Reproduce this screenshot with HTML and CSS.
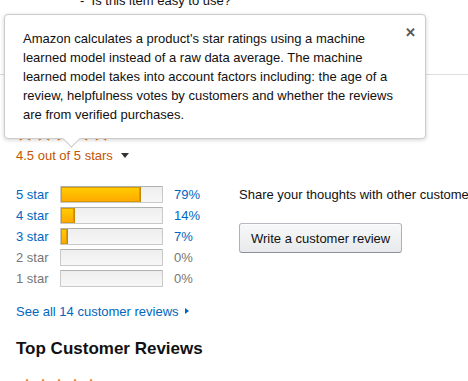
FILE: index.html
```html
<!DOCTYPE html>
<html lang="en">
<head>
  <meta charset="UTF-8" />
  <title>Customer Reviews</title>
  <link rel="stylesheet" href="styles.css">
</head>
<body>
  <div class="page">
    <div class="question">-&nbsp;&nbsp;Is this item easy to use?</div>
    <div class="divider"></div>

    <div class="stars big">
      <svg width="94" height="18" viewBox="0 0 94 18">
        <g fill="#ffa41c" stroke="#de7921" stroke-width="0.8">
          <path id="s" d="M9 1l2.4 5.2 5.6.6-4.2 3.8 1.2 5.6L9 13.4 4 16.2l1.2-5.6L1 6.8l5.6-.6z"/>
          <use href="#s" x="19"/>
          <use href="#s" x="38"/>
          <use href="#s" x="57"/>
          <use href="#s" x="76"/>
        </g>
      </svg>
    </div>
    <div class="rating">4.5 out of 5 stars <span class="caret"></span></div>

    <div class="summary">
      <div class="histogram">
        <div class="hist-row">
          <a class="hist-label">5 star</a>
          <div class="bar"><div class="fill" style="width:79%"></div></div>
          <a class="hist-pct">79%</a>
        </div>
        <div class="hist-row">
          <a class="hist-label">4 star</a>
          <div class="bar"><div class="fill" style="width:14%"></div></div>
          <a class="hist-pct">14%</a>
        </div>
        <div class="hist-row">
          <a class="hist-label">3 star</a>
          <div class="bar"><div class="fill" style="width:7%"></div></div>
          <a class="hist-pct">7%</a>
        </div>
        <div class="hist-row empty">
          <span class="hist-label">2 star</span>
          <div class="bar"></div>
          <span class="hist-pct">0%</span>
        </div>
        <div class="hist-row empty">
          <span class="hist-label">1 star</span>
          <div class="bar"></div>
          <span class="hist-pct">0%</span>
        </div>
      </div>

      <div class="share">
        <div class="share-text">Share your thoughts with other customers</div>
        <button class="review-btn">Write a customer review</button>
      </div>
    </div>

    <a class="see-all">See all 14 customer reviews <span class="arrow"></span></a>

    <h2 class="top-title">Top Customer Reviews</h2>

    <div class="review-head">
      <svg width="80" height="14" viewBox="0 0 80 14">
        <g fill="#ffa41c" stroke="#de7921" stroke-width="0.8">
          <path id="t" d="M7 1l1.9 4 4.3.5-3.2 2.9.9 4.3L7 10.5 3.1 12.7 4 8.4.8 5.5l4.3-.5z"/>
          <use href="#t" x="16"/>
          <use href="#t" x="32"/>
          <use href="#t" x="48"/>
          <use href="#t" x="64"/>
        </g>
      </svg>
      <span class="review-title">Welcome change</span>
    </div>

    <div class="popover">
      <span class="close">&#x2715;</span>
      Amazon calculates a product's star ratings using a machine learned model instead of a raw data average. The machine learned model takes into account factors including: the age of a review, helpfulness votes by customers and whether the reviews are from verified purchases.
      <span class="pointer"></span>
    </div>
  </div>
</body>
</html>
```

FILE: styles.css
```css
body {
  margin: 0;
  font-family: "Liberation Sans", Arial, sans-serif;
  font-size: 13px;
  line-height: 19px;
  color: #111;
  background: #fff;
  overflow: hidden;
}
a { color: #0066c0; text-decoration: none; }

.page { position: relative; display: flow-root; padding: 0 16px; }

.question { margin-top: -9px; padding-left: 64px; white-space: nowrap; }
.divider { height: 1px; background: #ddd; margin: 64px -16px 0 -16px; }

.stars { height: 18px; }
.stars.big { margin-top: 49px; }
.stars svg { display: block; }

.rating { margin-top: 4px; color: #c45500; }
.caret {
  display: inline-block; width: 0; height: 0; margin-left: 5px;
  border-left: 4px solid transparent; border-right: 4px solid transparent;
  border-top: 5px solid #333; vertical-align: 2px;
}

.summary { display: flex; margin-top: 19px; }
.histogram { width: 223px; flex-shrink: 0; }
.hist-row { display: flex; align-items: center; height: 21px; }
.hist-label { width: 44px; white-space: nowrap; }
.bar {
  width: 103px; height: 17px; box-sizing: border-box;
  border: 1px solid #c9c9c9; border-top-color: #b0b0b0; border-radius: 1px;
  background: linear-gradient(#eee, #f7f7f7);
  overflow: hidden;
}
.fill {
  height: 100%; box-sizing: border-box;
  border-right: 1px solid #c88a00;
  box-shadow: inset 0 0 0 1px #d89a00;
  background: linear-gradient(#ffce00, #ffa700);
}
.hist-pct { margin-left: 11px; }
.empty .hist-label, .empty .hist-pct { color: #767676; }

.share { display: flex; flex-direction: column; align-items: flex-start; white-space: nowrap; }
.share-text { line-height: 21px; }
.review-btn {
  margin-top: 18px; height: 30px; padding: 0 11px;
  font: inherit; color: #111;
  border: 1px solid #adb1b8; border-top-color: #b6b9bf; border-bottom-color: #8d9096;
  border-radius: 3px;
  background: linear-gradient(#f7f8fa, #e7e9ec);
  box-shadow: 0 1px 0 rgba(255,255,255,.6) inset;
}

.see-all { display: block; margin-top: 13px; }
.arrow {
  display: inline-block; width: 0; height: 0; margin-left: 3px;
  border-top: 3px solid transparent; border-bottom: 3px solid transparent;
  border-left: 4px solid #0066c0; vertical-align: 2px;
}

.top-title { margin: 17px 0 0; font-size: 17px; line-height: 22px; font-weight: bold; }

.review-head { display: flex; align-items: flex-start; gap: 4px; margin-top: 16px; padding-left: 4px; }
.review-head svg { display: block; margin-top: 2px; }
.review-title { font-weight: bold; }

.popover {
  position: absolute; left: 4px; top: 14px; width: 422px;
  box-sizing: border-box; padding: 14px 26px 14px 18px;
  background: #fff; border: 1px solid #ccc; border-radius: 4px;
  box-shadow: 0 1px 4px rgba(0,0,0,.18);
}
.close {
  position: absolute; right: 9px; top: 8px;
  font-size: 13px; font-weight: bold; color: #555;
}
.pointer {
  position: absolute; left: 60px; bottom: -7px;
  width: 12px; height: 12px; background: #fff;
  border-right: 1px solid #ccc; border-bottom: 1px solid #ccc;
  transform: rotate(45deg);
}
```
